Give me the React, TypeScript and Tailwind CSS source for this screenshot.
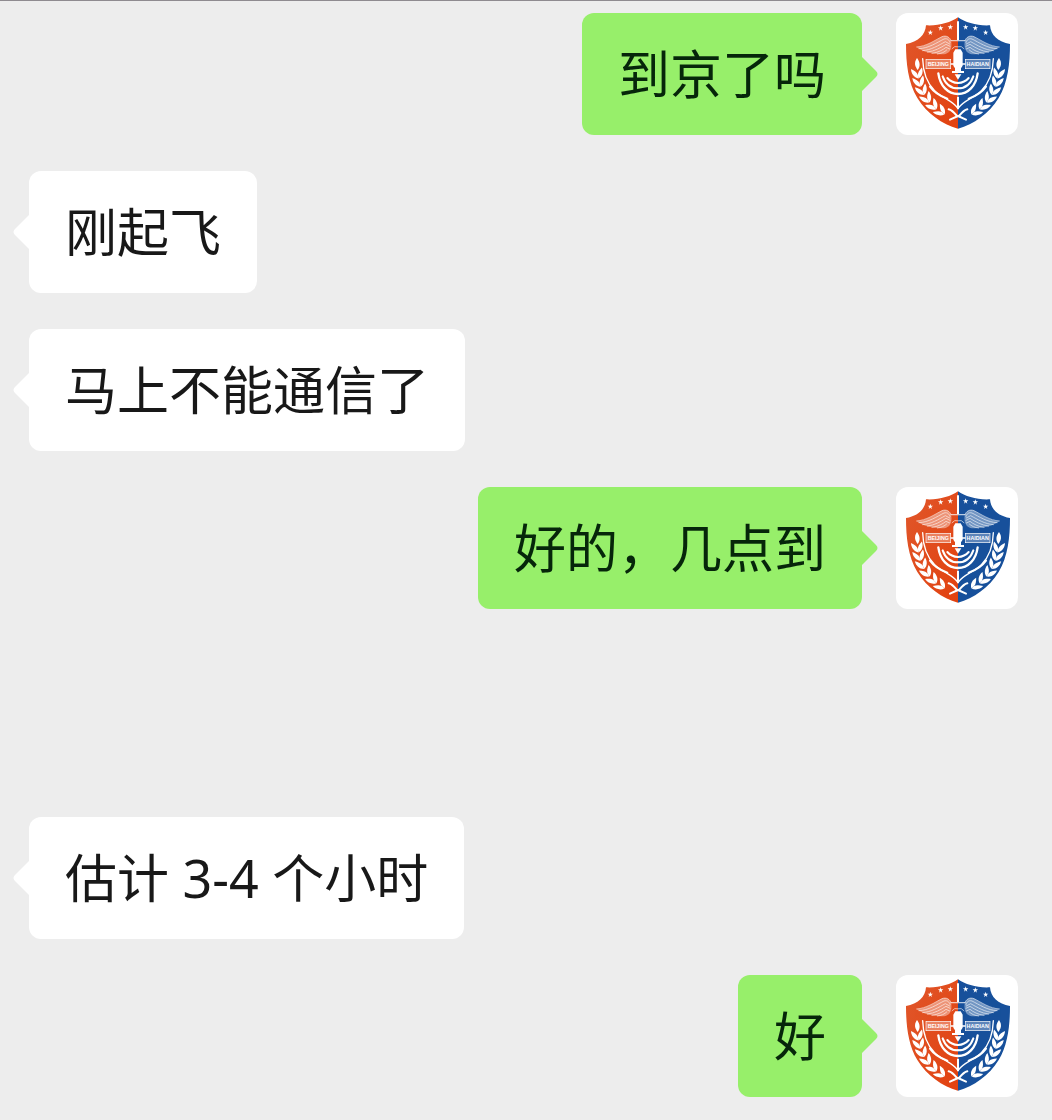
interface Message {
  id: number;
  text: string;
  mine: boolean;
  afterPause?: boolean;
}

const messages: Message[] = [
  { id: 1, text: "到京了吗", mine: true },
  { id: 2, text: "刚起飞", mine: false },
  { id: 3, text: "马上不能通信了", mine: false },
  { id: 4, text: "好的，几点到", mine: true },
  { id: 5, text: "估计 3-4 个小时", mine: false, afterPause: true },
  { id: 6, text: "好", mine: true },
];

// Wheat leaves along the lower left edge: x, y, rotation
const leaves = [
  [83, 224, -10],
  [88, 249, -15],
  [97, 274, -22],
  [111, 298, -32],
  [130, 319, -42],
  [153, 336, -52],
];

// Everything that is the same on both sides of the shield
function ShieldHalf() {
  return (
    <g fill="none" stroke="#fff" strokeLinecap="round">
      <g fill="#fff" stroke="none">
        <path d="M121 91l2 6 6 0-5 4 2 6-5-4-5 4 2-6-5-4 6 0z" />
        <path d="M152 78l2 6 6 0-5 4 2 6-5-4-5 4 2-6-5-4 6 0z" />
        <path d="M181 75l2 6 6 0-5 4 2 6-5-4-5 4 2-6-5-4 6 0z" />
      </g>

      {/* wing */}
      <path
        d="M80 144 C104 142 128 129 154 113 C172 104 188 118 184 142 C182 158 170 166 154 165 C130 164 101 160 80 144Z"
        fill="#fff"
        fillOpacity="0.4"
        stroke="none"
      />
      <g strokeWidth="2.5" opacity="0.7">
        <path d="M80 143 C110 141 132 124 156 112 C169 107 180 114 183 124" />
        <path d="M87 148 C116 147 140 130 162 119 C172 116 178 122 180 129" />
        <path d="M98 154 C124 152 146 138 166 127 L179 134" />
        <path d="M112 158 C134 156 152 145 168 135 L180 141" />
        <path d="M126 162 C144 160 158 152 168 144 L179 149" />
        <path d="M142 164 C154 163 164 158 170 152" />
      </g>
      <path d="M184 124 H203" strokeWidth="4" opacity="0.7" />
      <path d="M186 148 Q194 138 203 142" strokeWidth="3" opacity="0.6" />

      {/* branch */}
      <path d="M98 178 C99 218 110 250 134 274 C156 296 188 304 203 326" strokeWidth="4" />
      <path d="M120 262 C134 282 152 291 172 298" strokeWidth="6" />
      <path d="M81 176 C71 190 75 202 83 212 C92 200 90 188 81 176Z" fill="#fff" stroke="none" />
      {leaves.map(([x, y, angle]) => (
        <g key={y} transform={`translate(${x} ${y}) rotate(${angle})`} fill="#fff" stroke="none">
          <path d="M0 14 C-13 9 -19 -5 -17 -18 C-8 -11 -2 -6 0 3Z" />
          <path d="M0 14 C13 9 18 -4 16 -17 C7 -10 2 -5 0 3Z" />
        </g>
      ))}
      <path d="M176 330 Q186 332 201 350 M204 350 L180 361" strokeWidth="6" />

      {/* sound waves */}
      <path d="M172 236 Q184 250 204 251" strokeWidth="6" />
      <path d="M158 231 C166 254 182 267 204 267" strokeWidth="6" />
      <path d="M145 222 C150 260 174 284 204 284" strokeWidth="7" />
    </g>
  );
}

function Avatar() {
  return (
    <div className="size-[122px] shrink-0 overflow-hidden rounded-xl bg-white">
      <svg viewBox="18 41 366 366" className="size-full" role="img" aria-label="Beijing Haidian">
        <defs>
          <linearGradient id="red" x1="0" x2="1" y1="0" y2="1">
            <stop offset="0" stopColor="#e0572b" />
            <stop offset="1" stopColor="#e2410f" />
          </linearGradient>
        </defs>
        <path
          d="M204 54 C182 70 146 80 108 78 C106 108 84 128 48 134 C48 190 54 250 82 296 C112 344 156 374 204 388Z"
          fill="url(#red)"
        />
        <path
          d="M204 54 C226 70 262 80 300 78 C302 108 324 128 360 134 C360 190 354 250 326 296 C296 344 252 374 204 388Z"
          fill="#17509b"
        />
        <ShieldHalf />
        <g transform="translate(408 0) scale(-1 1)">
          <ShieldHalf />
        </g>

        <path d="M204 66 V122 M204 292 V330" stroke="#fff" strokeWidth="6" />
        <rect x="108" y="180" width="74" height="28" fill="#fff" fillOpacity="0.3" stroke="#fff" strokeWidth="2" />
        <rect x="226" y="180" width="74" height="28" fill="#fff" fillOpacity="0.3" stroke="#fff" strokeWidth="2" />
        <g className="font-['Liberation_Sans'] text-[16px] font-bold" fill="#fff" textAnchor="middle">
          <text x="145" y="200">BEIJING</text>
          <text x="263" y="200">HAIDIAN</text>
        </g>

        {/* microphone */}
        <path d="M182 194 H226" stroke="#fff" strokeWidth="5" />
        <path d="M196 150 H212 L218 160 V199 L213 207 V215 H222 V221 H186 V215 H195 V207 L190 199 V160Z" fill="#fff" />
        <path d="M194 225 H214 L204 241Z" fill="#fff" />
      </svg>
    </div>
  );
}

function Tail({ mine }: { mine: boolean }) {
  return (
    <svg
      viewBox="0 0 16 34"
      aria-hidden="true"
      className={
        mine
          ? "absolute top-1/2 left-full h-[34px] w-4 -translate-y-1/2 fill-[#97ef6a]"
          : "absolute top-1/2 right-full h-[34px] w-4 -translate-y-1/2 -scale-x-100 fill-white"
      }
    >
      <path d="M0 0 L14 14 Q17 17 14 20 L0 34Z" />
    </svg>
  );
}

function MessageRow({ message }: { message: Message }) {
  return (
    <li
      className={`flex items-start gap-[34px] ${message.mine ? "justify-end" : "justify-start"} ${
        message.afterPause ? "mt-[172px]" : ""
      }`}
    >
      <p
        className={`relative rounded-xl px-9 py-[25px] text-[52px] leading-[72px] ${
          message.mine ? "bg-[#97ef6a] text-[#06260a]" : "bg-white text-[#181818]"
        }`}
      >
        {message.text}
        <Tail mine={message.mine} />
      </p>
      {message.mine && <Avatar />}
    </li>
  );
}

function App() {
  return (
    <main className="min-h-screen border-t border-[#8f8b90] bg-[#ededed] pt-3 pr-[34px] pb-6 pl-[29px] font-['Noto_Sans','Noto_Sans_CJK_SC',sans-serif]">
      <ul className="flex flex-col gap-9">
        {messages.map((message) => (
          <MessageRow key={message.id} message={message} />
        ))}
      </ul>
    </main>
  );
}

export default App;
